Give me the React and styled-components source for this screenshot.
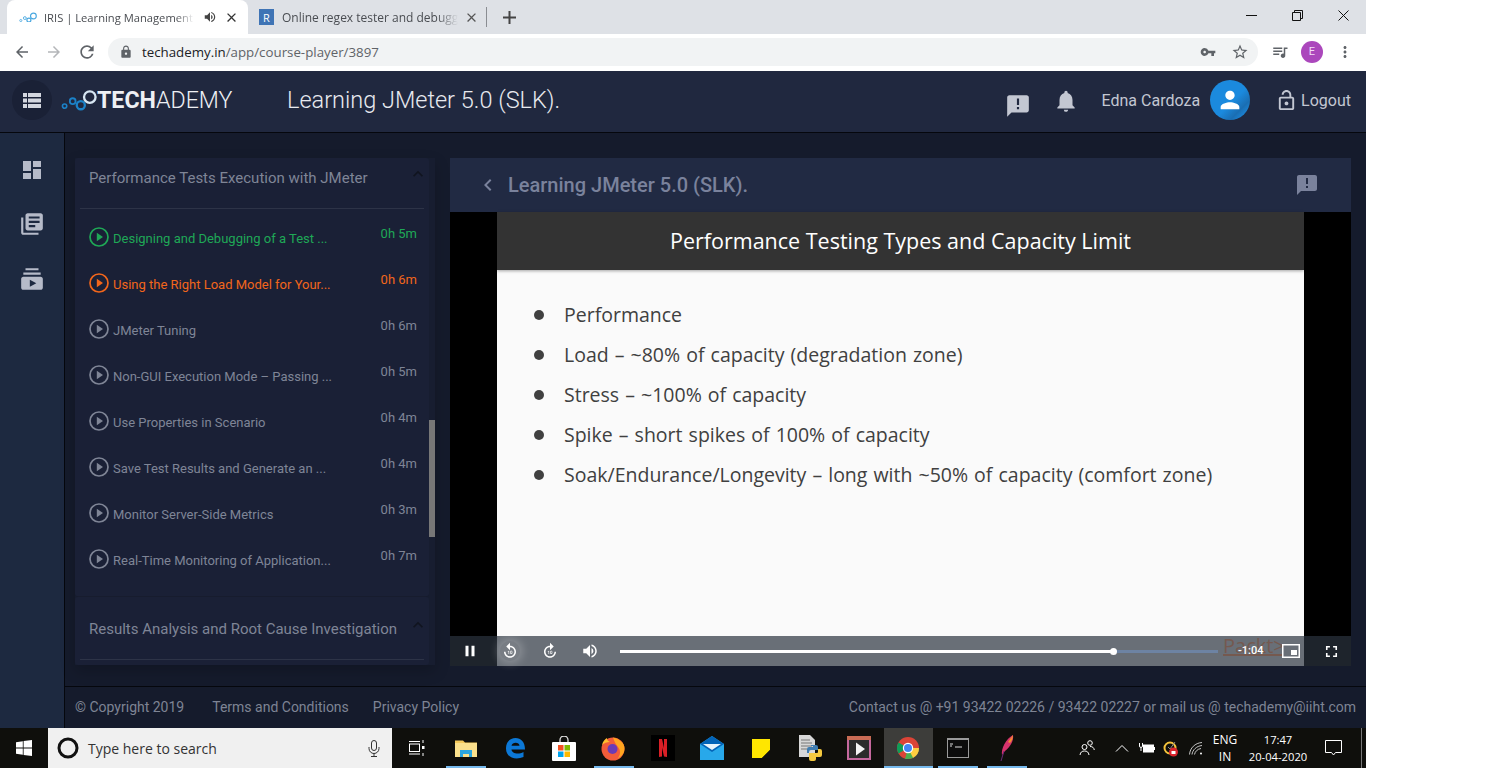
import React from 'react';
import styled, { createGlobalStyle } from 'styled-components';
import {
    MdAnnouncement,
    MdArrowBack,
    MdArrowForward,
    MdChevronLeft,
    MdClose,
    MdDashboard,
    MdExpandLess,
    MdForward10,
    MdFullscreen,
    MdLibraryBooks,
    MdLock,
    MdMoreVert,
    MdNotifications,
    MdOutlineLockOpen,
    MdPause,
    MdPerson,
    MdQueueMusic,
    MdRefresh,
    MdReplay10,
    MdStarBorder,
    MdSubscriptions,
    MdVolumeUp,
    MdVpnKey
} from 'react-icons/md';

const GlobalStyle = createGlobalStyle`
    html, body {
        margin: 0;
        padding: 0;
        background: #fff;
        overflow: hidden;
    }
    * {
        box-sizing: border-box;
    }
`;

const Screen = styled.div`
    width: 1366px;
    height: 768px;
    display: flex;
    flex-direction: column;
    font-family: Roboto, sans-serif;
`;

/* browser chrome */

const TabStrip = styled.div`
    height: 34px;
    background: #dee1e6;
    display: flex;
    align-items: flex-end;
    padding-left: 7px;
    flex: none;
`;

const Tab = styled.div`
    width: ${(p) => p.$width}px;
    height: 34px;
    padding-left: ${(p) => p.$pad}px;
    display: flex;
    align-items: center;
    background: ${(p) => (p.$active ? '#fff' : 'transparent')};
    border-radius: 8px 8px 0 0;
    font-family: "Open Sans", sans-serif;
    font-size: 12px;
    color: #4a4d52;
`;

const TabTitle = styled.span`
    width: ${(p) => p.$width}px;
    margin-left: ${(p) => p.$left}px;
    font-size: ${(p) => p.$size || 12}px;
    white-space: nowrap;
    -webkit-mask-image: linear-gradient(90deg, #000 88%, transparent);
    mask-image: linear-gradient(90deg, #000 88%, transparent);
`;

const RegexIcon = styled.span`
    width: 16px;
    height: 16px;
    background: #3f74b5;
    color: #fff;
    font-size: 11px;
    display: flex;
    align-items: center;
    justify-content: center;
`;

const TabSeparator = styled.span`
    width: 1px;
    height: 20px;
    background: #8a8d92;
    margin: 0 16px 7px 7px;
`;

const TabPlus = styled.span`
    display: flex;
    margin-bottom: 10px;
`;

const WindowButtons = styled.div`
    margin-left: auto;
    height: 30px;
    align-self: flex-start;
    display: flex;
    color: #111;
`;

const WindowButton = styled.span`
    width: 46px;
    height: 30px;
    display: flex;
    align-items: center;
    justify-content: center;
`;

const Toolbar = styled.div`
    height: 37px;
    background: #fff;
    display: flex;
    align-items: center;
    padding: 0 0 2px 13px;
    color: #5f6368;
    flex: none;
`;

const NavIcon = styled.span`
    width: 32px;
    display: flex;
    color: ${(p) => p.$color || '#5f6368'};
`;

const AddressBar = styled.div`
    width: 1150px;
    height: 28px;
    margin-left: -1px;
    border-radius: 14px;
    background: #f1f3f4;
    display: flex;
    align-items: center;
    padding: 0 9px 0 11px;
    font-family: "Open Sans", sans-serif;
    font-size: 13.3px;
    color: #5f6368;
`;

const Host = styled.span`
    color: #202124;
    margin-left: 9px;
`;

const AddressTools = styled.span`
    margin-left: auto;
    display: flex;
    gap: 15px;
    align-items: center;
`;

const ToolbarRight = styled.div`
    display: flex;
    align-items: center;
    margin-left: 13px;
`;

const ProfileBadge = styled.span`
    width: 22px;
    height: 22px;
    margin: 0 13px 0 12px;
    border-radius: 50%;
    background: #ab47bc;
    color: #f3ddf6;
    font-size: 11px;
    display: flex;
    align-items: center;
    justify-content: center;
`;

/* app header */

const Header = styled.header`
    height: 62px;
    background: #20283f;
    border-bottom: 1px solid #05070d;
    display: flex;
    align-items: center;
    padding: 0 15px 3px 12px;
    flex: none;
`;

const MenuCircle = styled.span`
    width: 40px;
    height: 40px;
    border-radius: 50%;
    background: #1a2136;
    display: flex;
    align-items: center;
    justify-content: center;
`;

const Logo = styled.div`
    display: flex;
    align-items: center;
    margin-left: 9px;
    width: 226px;
    font-size: 23.2px;
    font-weight: 300;
    color: #eef0f4;
`;

const LogoBold = styled.b`
    font-weight: 700;
`;

const CourseName = styled.div`
    font-size: 23.5px;
    font-weight: 300;
    color: #e8eaef;
    white-space: nowrap;
`;

const HeaderRight = styled.div`
    margin-left: auto;
    display: flex;
    align-items: center;
    color: #c3c7d2;
    font-size: 16px;
`;

const HeaderIcon = styled.span`
    display: flex;
    margin-right: ${(p) => p.$right}px;
    margin-top: ${(p) => p.$top || 0}px;
`;

const Avatar = styled.span`
    width: 40px;
    height: 40px;
    margin: 0 25px 0 10px;
    border-radius: 50%;
    background: linear-gradient(135deg, #1b8ade 55%, #1a6eb3 75%, #1b8ade 90%);
    color: #fff;
    display: flex;
    align-items: center;
    justify-content: center;
`;

/* content */

const Body = styled.div`
    flex: 1;
    min-height: 0;
    display: flex;
`;

const SideNav = styled.nav`
    width: 65px;
    background: #1d2940;
    border-right: 1px solid #05070d;
    display: flex;
    flex-direction: column;
    align-items: center;
    gap: 29px;
    padding-top: 25px;
    color: #b6bbc9;
    flex: none;
`;

const Main = styled.div`
    flex: 1;
    min-width: 0;
    display: flex;
    flex-direction: column;
    background: #151b2c;
`;

const Columns = styled.div`
    height: 553px;
    display: flex;
    padding: 25px 15px 0 10px;
`;

const Outline = styled.div`
    width: 360px;
    height: 507px;
    display: flex;
    flex-direction: column;
    position: relative;
    background: #171d30;
    box-shadow: 0 6px 14px rgba(0, 0, 0, 0.2);
    flex: none;
`;

const ScrollThumb = styled.span`
    position: absolute;
    right: 0;
    top: 262px;
    width: 6px;
    height: 117px;
    background: #777;
`;

const Section = styled.section`
    width: 354px;
    padding: 0 5px;
    background: #1a2036;
    border-radius: 3px;
    border-bottom: ${(p) => (p.$last ? '0' : '1px solid #171c2e')};
    flex: ${(p) => (p.$last ? 1 : 'none')};
    height: ${(p) => (p.$last ? 'auto' : '439px')};
`;

const SectionHead = styled.div`
    height: ${(p) => p.$height}px;
    padding: ${(p) => (p.$last ? '2px' : '10px')} 9px 0;
    border-bottom: 1px solid #2d3347;
    display: flex;
    justify-content: space-between;
    align-items: ${(p) => (p.$last ? 'center' : 'flex-start')};
    font-size: 15px;
    line-height: 20px;
    color: #7f8596;
`;

const Chevron = styled.span`
    display: flex;
    color: #10141f;
    margin: ${(p) => (p.$last ? '-8px' : '-4px')} -13px 0 0;
`;

const LessonList = styled.div`
    padding-top: 5px;
`;

const Lesson = styled.div`
    height: 46px;
    padding: 0 7px 0 9px;
    display: flex;
    align-items: center;
    color: ${(p) => p.$color};
    font-size: 13px;
`;

const LessonIcon = styled.span`
    display: flex;
    margin-right: 4px;
`;

const LessonTitle = styled.span`
    margin-top: 3px;
    white-space: nowrap;
`;

const Duration = styled.span`
    margin-left: auto;
    margin-top: -7px;
`;

const Player = styled.div`
    width: 901px;
    height: 508px;
    margin-left: 15px;
    display: flex;
    flex-direction: column;
    flex: none;
`;

const PlayerBar = styled.div`
    height: 54px;
    background: #212a43;
    display: flex;
    align-items: center;
    padding: 0 32px 0 26px;
    color: #7a829c;
    font-size: 20px;
    font-weight: 500;
    flex: none;
`;

const PlayerIcon = styled.span`
    display: flex;
    margin-left: ${(p) => p.$left || 0};
    margin-right: ${(p) => p.$right || 0}px;
`;

const Video = styled.div`
    flex: 1;
    background: #000;
    display: flex;
    justify-content: center;
    position: relative;
`;

const Slide = styled.div`
    width: 807px;
    background: #fafafa;
    font-family: "Open Sans", sans-serif;
`;

const SlideTitle = styled.div`
    height: 58px;
    padding-bottom: 2px;
    background: #333;
    color: #fff;
    font-size: 21.5px;
    display: flex;
    align-items: center;
    justify-content: center;
    box-shadow: 0 1px 3px rgba(0, 0, 0, 0.35);
`;

const SlideList = styled.ul`
    margin: 25px 0 0;
    padding: 0 0 0 67px;
    list-style: none;
    color: #404040;
    font-size: 19.5px;
    word-spacing: 1px;
`;

const SlideItem = styled.li`
    height: 40px;
    line-height: 40px;
    position: relative;
    white-space: nowrap;
    &::before {
        content: '';
        position: absolute;
        left: -30px;
        top: 15px;
        width: 10px;
        height: 10px;
        border-radius: 50%;
        background: #404040;
    }
`;

const Controls = styled.div`
    position: absolute;
    left: 0;
    right: 0;
    bottom: 0;
    height: 30px;
    background: rgba(43, 51, 63, 0.7);
    color: #fff;
`;

const PacktMark = styled.span`
    position: absolute;
    left: 773px;
    top: 0;
    width: 60px;
    height: 20px;
    font-family: "Open Sans", sans-serif;
    font-size: 20px;
    line-height: 19px;
    white-space: nowrap;
    color: #75594f;
    border-bottom: 2px solid #75594f;
`;

const ControlButton = styled.span`
    position: absolute;
    left: ${(p) => p.$x - 10}px;
    top: 5px;
    width: 20px;
    height: 20px;
    display: flex;
    align-items: center;
    justify-content: center;
    border-radius: 50%;
    box-shadow: ${(p) => (p.$focus ? '0 0 9px 3px rgba(255, 255, 255, 0.22)' : 'none')};
    background: ${(p) => (p.$focus ? 'rgba(255, 255, 255, 0.1)' : 'none')};
`;

const ProgressTrack = styled.div`
    position: absolute;
    left: 170px;
    top: 14px;
    width: 598px;
    height: 3px;
    background: #6d83a3;
`;

const ProgressFill = styled.div`
    height: 3px;
    background: #fff;
    position: relative;
    &::after {
        content: '';
        position: absolute;
        right: -3px;
        top: -2px;
        width: 7px;
        height: 7px;
        border-radius: 50%;
        background: #fff;
    }
`;

const TimeLeft = styled.span`
    position: absolute;
    left: 788px;
    top: 8px;
    font-size: 11px;
    line-height: 14px;
    font-weight: 500;
`;

const Footer = styled.footer`
    flex: 1;
    border-top: 1px solid #05070d;
    padding: 0 10px 2px;
    display: flex;
    align-items: center;
    gap: 24px;
    font-size: 14px;
    color: #7e8494;
`;

const FooterSpaced = styled.span`
    margin-left: 4px;
`;

const Contact = styled.span`
    margin-left: auto;
`;

/* windows taskbar */

const Taskbar = styled.div`
    height: 40px;
    background: #0f0f0c;
    display: flex;
    color: #fff;
    flex: none;
`;

const StartButton = styled.span`
    width: 48px;
    display: flex;
    align-items: center;
    justify-content: center;
`;

const SearchBox = styled.div`
    width: 344px;
    background: #f0f0f0;
    display: flex;
    align-items: center;
    padding: 0 12px 0 9px;
    font-family: "Open Sans", sans-serif;
    font-size: 14px;
    color: #333;
`;

const SearchText = styled.span`
    margin-left: 9px;
    flex: 1;
`;

const TaskItem = styled.span`
    width: 49.2px;
    display: flex;
    align-items: center;
    justify-content: center;
    position: relative;
    background: ${(p) => (p.$active ? '#3d3d3a' : 'none')};
    &::after {
        content: '';
        display: ${(p) => (p.$open ? 'block' : 'none')};
        position: absolute;
        left: ${(p) => (p.$active ? 0 : '5px')};
        right: ${(p) => (p.$active ? 0 : '4px')};
        bottom: 0;
        height: 2px;
        background: #76b9ed;
    }
`;

const Tray = styled.div`
    margin-left: auto;
    width: 296px;
    display: flex;
    align-items: center;
    font-family: "Open Sans", sans-serif;
    font-size: 12px;
    padding-left: 9px;
`;

const TrayIcon = styled.span`
    display: flex;
    margin-right: ${(p) => p.$right}px;
`;

const TrayStack = styled.span`
    display: flex;
    flex-direction: column;
    align-items: center;
    width: ${(p) => p.$width}px;
    font-size: ${(p) => p.$size || 12}px;
    line-height: 17px;
    white-space: nowrap;
    margin-right: ${(p) => p.$right}px;
`;

const TaskbarEdge = styled.span`
    width: 1px;
    height: 40px;
    background: #777;
`;

/* drawings */

function ChainMark({ size = 30, color = '#1b82c8', head = '#d7e6f2' }) {
    return (
        <svg width={size} height={size * 0.6} viewBox="0 0 40 24" fill="none" strokeWidth="2.6">
            <circle cx="4" cy="19" r="2.4" stroke={color} strokeWidth="1.8" />
            <circle cx="13" cy="13.5" r="3.2" stroke={color} strokeWidth="2" />
            <circle cx="22" cy="18" r="4.5" stroke={color} />
            <circle cx="32" cy="9" r="6.4" stroke={head} />
        </svg>
    );
}

function ListGlyph() {
    return (
        <svg width="18" height="15" viewBox="0 0 18 15" fill="#d4d7df">
            <path d="M0 0h4v4H0zM5 0h13v4H5zM0 5.500h4v4H0zM5 5.500h13v4H5zM0 11h4v4H0zM5 11h13v4H5z" />
        </svg>
    );
}

function PlayRing() {
    return (
        <svg width="20" height="20" viewBox="0 0 20 20">
            <circle cx="10" cy="10" r="9" fill="none" stroke="currentColor" strokeWidth="1.7" />
            <path d="M7.800 5.800 14 10l-6.200 4.200z" fill="currentColor" />
        </svg>
    );
}

function WindowsLogo() {
    return (
        <svg width="16" height="16" viewBox="0 0 16 16" fill="#fff">
            <path d="M0 2.2 6.8 1.2v6.4H0zM7.6 1.1 16 0v7.6H7.6zM0 8.4h6.8v6.4L0 13.8zM7.6 8.4H16V16l-8.4-1.1z" />
        </svg>
    );
}

function TaskViewIcon() {
    return (
        <svg width="16" height="16" viewBox="0 0 16 16" fill="none" stroke="#fff" strokeWidth="1">
            <rect x="0.5" y="4" width="10" height="7.5" />
            <path d="M0 1.5h11M0 14h11M14 0v3M14 13v3" />
            <rect x="13" y="6" width="2.5" height="3" fill="#fff" stroke="none" />
        </svg>
    );
}

function FolderIcon() {
    return (
        <svg width="22" height="18" viewBox="0 0 22 18">
            <path d="M0 1.5h8l2 2h12V18H0z" fill="#f5c95a" />
            <path d="M0 4h22v14H0z" fill="#fbe08c" />
            <path d="M5 11h12v7h-3v-3H8v3H5z" fill="#2ba6e0" />
        </svg>
    );
}

function EdgeIcon() {
    return (
        <svg width="20" height="22" viewBox="0 0 20 22">
            <path
                d="M1 11C1 4.5 5.5 1 10.5 1 16 1 20 5 20 12.5H6.5c.3 3.8 6.5 5.5 12 2.5v5c-8 3.5-17.5.8-17.5-8.500zM6.500 8.800h8c0-4-7.500-4-8 0z"
                fill="#0c78d6"
            />
        </svg>
    );
}

function StoreIcon() {
    return (
        <svg width="24" height="25" viewBox="0 0 24 25">
            <path d="M8 7V4a4 4 0 0 1 8 0v3" fill="none" stroke="#ddd" strokeWidth="1.3" />
            <rect y="6" width="24" height="19" rx="1" fill="#fff" />
            <rect x="6" y="9" width="5.500" height="5.500" fill="#f25022" />
            <rect x="12.500" y="9" width="5.500" height="5.500" fill="#7fba00" />
            <rect x="6" y="15.500" width="5.500" height="5.500" fill="#00a4ef" />
            <rect x="12.500" y="15.500" width="5.500" height="5.500" fill="#ffb900" />
        </svg>
    );
}

function FirefoxIcon() {
    return (
        <svg width="24" height="26" viewBox="0 0 24 26">
            <circle cx="12" cy="14" r="11.500" fill="#f25c3a" />
            <path d="M12 2.500c5 1 12 5 11.500 11.500-.3 5-3.500 8-7 9.500 3-3 3.500-8 .5-11.500C15 9.500 13 6 12 2.500z" fill="#ffa51f" />
            <path d="M1 10c1-4 3-6 5-7 0 2 1 3 3 4-3 0-6 1-8 3z" fill="#ffbd2e" />
            <circle cx="11.500" cy="14" r="5" fill="#6a3bb5" />
        </svg>
    );
}

function NetflixIcon() {
    return (
        <svg width="24" height="26" viewBox="0 0 24 26">
            <rect width="24" height="26" fill="#000" />
            <path d="M8 4h3l2 9V4h3v18l-3-.5-2-9v9L8 22z" fill="#d81f26" />
        </svg>
    );
}

function MailIcon() {
    return (
        <svg width="24" height="24" viewBox="0 0 24 24">
            <path d="M0 8 12 0l12 8v16H0z" fill="#28a8ea" />
            <path d="M0 8 12 0l12 8-12 8z" fill="#0364b8" />
            <path d="M3 8h18l-9 6z" fill="#e8f4fc" />
        </svg>
    );
}

function StickyIcon() {
    return (
        <svg width="18" height="19" viewBox="0 0 18 19">
            <path d="M0 0h18v11l-8 8H0z" fill="#ffe600" />
            <path d="M18 11v8h-8z" fill="#111" />
        </svg>
    );
}

function PythonFileIcon() {
    return (
        <svg width="24" height="26" viewBox="0 0 24 26">
            <path d="M1 0h11l5 5v17H1z" fill="#d8d8d8" />
            <path d="M3 5h9M3 8h11M3 11h11M3 14h6" stroke="#777" strokeWidth="1" />
            <path d="M13 10h5a2 2 0 0 1 2 2v3h-7a2 2 0 0 0-2 2v1H9v-4a2 2 0 0 1 2-2h4v-1h-2z" fill="#3f7cb0" />
            <path d="M20 14h2a2 2 0 0 1 2 2v4a2 2 0 0 1-2 2h-4v2a2 2 0 0 1-2 2h-3a2 2 0 0 1-2-2v-6h8a1 1 0 0 0 1-1z" fill="#f5c93f" />
        </svg>
    );
}

function ClipIcon() {
    return (
        <svg width="24" height="24" viewBox="0 0 24 24">
            <rect width="24" height="24" fill="#c5689e" />
            <rect y="0" width="24" height="4" fill="#c96c55" />
            <rect x="2" y="4" width="20" height="18" fill="#2b2b2b" />
            <path d="M9 6.500 18 13l-9 6.500z" fill="#f4f4f4" />
        </svg>
    );
}

function ChromeIcon() {
    return (
        <svg width="22" height="22" viewBox="0 0 22 22">
            <circle cx="11" cy="11" r="11" fill="#db4437" />
            <path d="M11 11 1.500 16.500A11 11 0 0 1 1.500 5.500z" fill="#0f9d58" />
            <path d="M11 11H22a11 11 0 0 1-11 11H8z" fill="#4caf50" />
            <path d="M11 11h11a11 11 0 0 1-6 9.800z" fill="#ffcd40" />
            <circle cx="11" cy="11" r="5.200" fill="#fff" />
            <circle cx="11" cy="11" r="4" fill="#4285f4" />
        </svg>
    );
}

function ConsoleIcon() {
    return (
        <svg width="22" height="20" viewBox="0 0 22 20">
            <rect width="22" height="20" fill="#9a9a9a" />
            <rect x="1" y="2" width="20" height="17" fill="#0c0c0c" />
            <path d="M3 6h3M3 8h2M8 9h7" stroke="#ddd" strokeWidth="1.200" />
        </svg>
    );
}

function FeatherIcon() {
    return (
        <svg width="14" height="26" viewBox="0 0 14 26">
            <path d="M13 0c1 6-3 12-8 16L2 20C1 13 6 4 13 0z" fill="#d6336c" />
            <path d="M13 0c0 3-1 6-3 8L8 7z" fill="#f28b30" />
            <path d="M4 16 1 26" stroke="#6a2a7a" strokeWidth="1" />
        </svg>
    );
}

function PeopleIcon() {
    return (
        <svg width="16" height="16" viewBox="0 0 16 16" fill="none" stroke="#fff" strokeWidth="1">
            <circle cx="5.500" cy="7" r="2.500" />
            <path d="M1 15c.5-3 2-4 4.500-4s4 1 4.500 4" />
            <circle cx="11" cy="3" r="2.300" />
            <path d="M11 6.500c2.500 0 3.800 1 4.300 3.500" />
        </svg>
    );
}

function BatteryIcon() {
    return (
        <svg width="16" height="12" viewBox="0 0 16 12" fill="none" stroke="#fff" strokeWidth="1">
            <rect x="4.500" y="3" width="10" height="7" fill="#fff" />
            <path d="M0.500 1v3a1.500 1.500 0 0 0 3 0V1M2 6v3" />
            <path d="M15.500 5v3" />
        </svg>
    );
}

function NortonIcon() {
    return (
        <svg width="16" height="17" viewBox="0 0 16 17">
            <circle cx="7" cy="8" r="5.500" fill="none" stroke="#f5c33b" strokeWidth="2" />
            <path d="M5 7l2 2 5-7" fill="none" stroke="#888" strokeWidth="1" />
            <circle cx="10.500" cy="12" r="4.500" fill="#d9232d" />
            <rect x="8.500" y="11" width="4" height="3" fill="#fff" />
        </svg>
    );
}

function WifiIcon() {
    return (
        <svg width="14" height="13" viewBox="0 0 14 13" fill="none" stroke="#d8d8d8" strokeWidth="0.900">
            <path d="M.5 12.500C1 6 6 1 13 .5M3 12.500C3.500 8 7.500 4 13 3.500M5.500 12.500C6 9.500 8.500 7 12 6.500" />
            <circle cx="12" cy="11.500" r="1" fill="#fff" stroke="none" />
        </svg>
    );
}

function NotificationIcon() {
    return (
        <svg width="17" height="16" viewBox="0 0 17 16" fill="none" stroke="#fff" strokeWidth="1">
            <path d="M.5.5h16v12h-6l-2 2.500-2-2.500h-6z" />
        </svg>
    );
}

const LESSONS = [
    { title: 'Designing and Debugging of a Test ...', time: '0h 5m', color: '#1fa856' },
    { title: 'Using the Right Load Model for Your...', time: '0h 6m', color: '#f2661b' },
    { title: 'JMeter Tuning', time: '0h 6m', color: '#7f8596' },
    { title: 'Non-GUI Execution Mode – Passing ...', time: '0h 5m', color: '#7f8596' },
    { title: 'Use Properties in Scenario', time: '0h 4m', color: '#7f8596' },
    { title: 'Save Test Results and Generate an ...', time: '0h 4m', color: '#7f8596' },
    { title: 'Monitor Server-Side Metrics', time: '0h 3m', color: '#7f8596' },
    { title: 'Real-Time Monitoring of Application...', time: '0h 7m', color: '#7f8596' }
];

const BULLETS = [
    'Performance',
    'Load – ~80% of capacity (degradation zone)',
    'Stress – ~100% of capacity',
    'Spike – short spikes of 100% of capacity',
    'Soak/Endurance/Longevity – long with ~50% of capacity (comfort zone)'
];

const TASK_ICONS = [
    { key: 'taskview', icon: <TaskViewIcon /> },
    { key: 'folder', icon: <FolderIcon />, open: true },
    { key: 'edge', icon: <EdgeIcon /> },
    { key: 'store', icon: <StoreIcon /> },
    { key: 'firefox', icon: <FirefoxIcon />, open: true },
    { key: 'netflix', icon: <NetflixIcon /> },
    { key: 'mail', icon: <MailIcon /> },
    { key: 'sticky', icon: <StickyIcon /> },
    { key: 'python', icon: <PythonFileIcon /> },
    { key: 'clip', icon: <ClipIcon /> },
    { key: 'chrome', icon: <ChromeIcon />, open: true, active: true },
    { key: 'console', icon: <ConsoleIcon />, open: true },
    { key: 'feather', icon: <FeatherIcon />, open: true }
];

export default function App() {
    return (
        <Screen>
            <GlobalStyle />
            <TabStrip>
                <Tab $active $width={241} $pad={12}>
                    <ChainMark size={18} color="#4aa8e0" head="#4aa8e0" />
                    <TabTitle $width={150} $left={7} $size={11.2}>IRIS | Learning Management</TabTitle>
                    <PlayerIcon $left="9px"><MdVolumeUp size={14} color="#444" /></PlayerIcon>
                    <PlayerIcon $left="7px"><MdClose size={15} color="#333" /></PlayerIcon>
                </Tab>
                <Tab $width={231} $pad={11}>
                    <RegexIcon>R</RegexIcon>
                    <TabTitle $width={176} $left={8}>Online regex tester and debugge</TabTitle>
                    <PlayerIcon $left="6px"><MdClose size={15} color="#555" /></PlayerIcon>
                </Tab>
                <TabSeparator />
                <TabPlus><svg width="13" height="13" viewBox="0 0 13 13" stroke="#444" strokeWidth="2"><path d="M6.500 0v13M0 6.500h13" /></svg></TabPlus>
                <WindowButtons>
                    <WindowButton>
                        <svg width="11" height="11" viewBox="0 0 11 11" stroke="#111"><path d="M0 5.500h11" /></svg>
                    </WindowButton>
                    <WindowButton>
                        <svg width="11" height="11" viewBox="0 0 11 11" fill="none" stroke="#111"><path d="M.5 2.500h8v8h-8zM2.500 2.500v-2h8v8h-2" /></svg>
                    </WindowButton>
                    <WindowButton>
                        <svg width="11" height="11" viewBox="0 0 11 11" stroke="#111"><path d="M.5.500l10 10M10.500.500l-10 10" /></svg>
                    </WindowButton>
                </WindowButtons>
            </TabStrip>
            <Toolbar>
                <NavIcon><MdArrowBack size={18} /></NavIcon>
                <NavIcon $color="#b4b6b9"><MdArrowForward size={18} /></NavIcon>
                <NavIcon><MdRefresh size={20} /></NavIcon>
                <AddressBar>
                    <MdLock size={14} />
                    <Host>techademy.in</Host>/app/course-player/3897
                    <AddressTools>
                        <MdVpnKey size={16} />
                        <MdStarBorder size={18} />
                    </AddressTools>
                </AddressBar>
                <ToolbarRight>
                    <MdQueueMusic size={18} />
                    <ProfileBadge>E</ProfileBadge>
                    <MdMoreVert size={18} />
                </ToolbarRight>
            </Toolbar>
            <Header>
                <MenuCircle><ListGlyph /></MenuCircle>
                <Logo>
                    <ChainMark size={36} />
                    <span><LogoBold>TECH</LogoBold>ADEMY</span>
                </Logo>
                <CourseName>Learning JMeter 5.0 (SLK).</CourseName>
                <HeaderRight>
                    <HeaderIcon $right={22} $top={12}><MdAnnouncement size={26} /></HeaderIcon>
                    <HeaderIcon $right={23} $top={2}><MdNotifications size={26} /></HeaderIcon>
                    Edna Cardoza
                    <Avatar><MdPerson size={28} /></Avatar>
                    <HeaderIcon $right={3}><MdOutlineLockOpen size={23} /></HeaderIcon>
                    Logout
                </HeaderRight>
            </Header>
            <Body>
                <SideNav>
                    <MdDashboard size={24} />
                    <MdLibraryBooks size={26} />
                    <MdSubscriptions size={26} />
                </SideNav>
                <Main>
                    <Columns>
                        <Outline>
                            <Section>
                                <SectionHead $height={51}>
                                    Performance Tests Execution with JMeter
                                    <Chevron><MdExpandLess size={20} /></Chevron>
                                </SectionHead>
                                <LessonList>
                                    {LESSONS.map((lesson) => (
                                        <Lesson key={lesson.title} $color={lesson.color}>
                                            <LessonIcon><PlayRing /></LessonIcon>
                                            <LessonTitle>{lesson.title}</LessonTitle>
                                            <Duration>{lesson.time}</Duration>
                                        </Lesson>
                                    ))}
                                </LessonList>
                            </Section>
                            <Section $last>
                                <SectionHead $last $height={63}>
                                    Results Analysis and Root Cause Investigation
                                    <Chevron $last><MdExpandLess size={20} /></Chevron>
                                </SectionHead>
                            </Section>
                            <ScrollThumb />
                        </Outline>
                        <Player>
                            <PlayerBar>
                                <PlayerIcon $right={8}><MdChevronLeft size={24} /></PlayerIcon>
                                Learning JMeter 5.0 (SLK).
                                <PlayerIcon $left="auto"><MdAnnouncement size={24} /></PlayerIcon>
                            </PlayerBar>
                            <Video>
                                <Slide>
                                    <SlideTitle>Performance Testing Types and Capacity Limit</SlideTitle>
                                    <SlideList>
                                        {BULLETS.map((bullet) => (
                                            <SlideItem key={bullet}>{bullet}</SlideItem>
                                        ))}
                                    </SlideList>
                                </Slide>
                                <Controls>
                                    <PacktMark>Packt&gt;</PacktMark>
                                    <ControlButton $x={20}><MdPause size={18} /></ControlButton>
                                    <ControlButton $x={60} $focus><MdReplay10 size={18} /></ControlButton>
                                    <ControlButton $x={100}><MdForward10 size={18} /></ControlButton>
                                    <ControlButton $x={140}><MdVolumeUp size={18} /></ControlButton>
                                    <ProgressTrack>
                                        <ProgressFill style={{ width: '82.600%' }} />
                                    </ProgressTrack>
                                    <TimeLeft>-1:04</TimeLeft>
                                    <ControlButton $x={841}>
                                        <svg width="18" height="14" viewBox="0 0 18 14" fill="none" stroke="#fff" strokeWidth="1.500">
                                            <rect x=".75" y=".75" width="16.500" height="12.500" />
                                            <rect x="9" y="6" width="6" height="5" fill="#fff" stroke="none" />
                                        </svg>
                                    </ControlButton>
                                    <ControlButton $x={881}><MdFullscreen size={19} /></ControlButton>
                                </Controls>
                            </Video>
                        </Player>
                    </Columns>
                    <Footer>
                        <span>© Copyright 2019</span>
                        <FooterSpaced>Terms and Conditions</FooterSpaced>
                        <span>Privacy Policy</span>
                        <Contact>Contact us @ +91 93422 02226 / 93422 02227 or mail us @ techademy@iiht.com</Contact>
                    </Footer>
                </Main>
            </Body>
            <Taskbar>
                <StartButton><WindowsLogo /></StartButton>
                <SearchBox>
                    <svg width="22" height="22" viewBox="0 0 22 22" fill="none" stroke="#111" strokeWidth="3"><circle cx="11" cy="11" r="9" /></svg>
                    <SearchText>Type here to search</SearchText>
                    <svg width="12" height="17" viewBox="0 0 12 17" fill="none" stroke="#333" strokeWidth="1">
                        <rect x="3.500" y=".5" width="5" height="10" rx="2.500" />
                        <path d="M1 7v1.500a5 5 0 0 0 10 0V7M6 13.500v3M3 16.500h6" />
                    </svg>
                </SearchBox>
                {TASK_ICONS.map((item) => (
                    <TaskItem key={item.key} $open={item.open} $active={item.active}>{item.icon}</TaskItem>
                ))}
                <Tray>
                    <TrayIcon $right={20}><PeopleIcon /></TrayIcon>
                    <TrayIcon $right={10}>
                        <svg width="14" height="8" viewBox="0 0 14 8" fill="none" stroke="#fff"><path d="M1 7.500 7 1.500l6 6" /></svg>
                    </TrayIcon>
                    <TrayIcon $right={8}><BatteryIcon /></TrayIcon>
                    <TrayIcon $right={10}><NortonIcon /></TrayIcon>
                    <TrayIcon $right={10}><WifiIcon /></TrayIcon>
                    <TrayStack $width={24} $right={11}><span>ENG</span><span>IN</span></TrayStack>
                    <TrayStack $width={60} $right={17} $size={11.2}><span>17:47</span><span>20-04-2020</span></TrayStack>
                    <TrayIcon $right={19}><NotificationIcon /></TrayIcon>
                    <TaskbarEdge />
                </Tray>
            </Taskbar>
        </Screen>
    );
}
